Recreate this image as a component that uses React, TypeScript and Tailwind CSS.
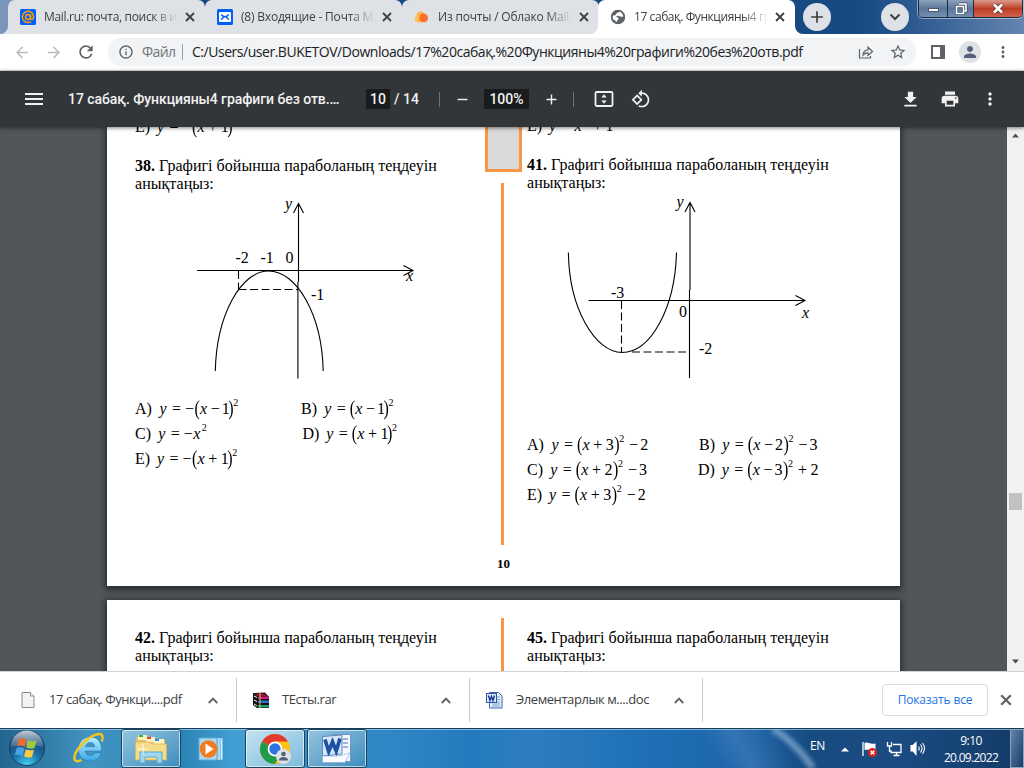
import React from "react";
import {
  MdAdd, MdArrowBack, MdArrowForward, MdFileDownload, MdInfoOutline, MdMenu, MdMoreVert,
  MdPerson, MdPrint, MdRefresh, MdRemove, MdRotate90DegreesCcw, MdStarBorder,
} from "react-icons/md";

/* ---------- tab strip ---------- */

const Cross = ({ cls }: { cls: string }) => (
  <svg viewBox="0 0 10 10" className={"shrink-0 " + cls}><path d="M1 1l8 8M9 1L1 9" fill="none" stroke="currentColor" strokeWidth="1.800" /></svg>
);

const MailRuIcon = () => (
  <svg width="16" height="16" viewBox="0 0 16 16" className="shrink-0">
    <rect width="16" height="16" rx="1.500" fill="#005ff9" />
    <g fill="none" stroke="#ff9e00" strokeWidth="1.500">
      <circle cx="8" cy="8" r="2.500" />
      <path d="M10.500 5.400V9c0 2.200 3.100 1.900 3.100-1A5.600 5.600 0 1 0 11 12.700" />
    </g>
  </svg>
);
const EnvelopeIcon = () => (
  <svg width="16" height="16" viewBox="0 0 16 16" className="shrink-0">
    <rect width="16" height="16" rx="1.500" fill="#005ff9" />
    <rect x="2" y="3" width="12" height="10" rx="1" fill="#fff" />
    <path d="M4.300 5.500q3.700 4.600 7.400 0M4.300 10.800L6.500 8.300M11.700 10.800L9.500 8.300" fill="none" stroke="#005ff9" strokeWidth="1.400" />
  </svg>
);
const CloudIcon = () => (
  <svg width="16" height="16" viewBox="0 0 16 16" className="shrink-0">
    <circle cx="6.500" cy="6.200" r="3.800" fill="#ffb13d" />
    <circle cx="4" cy="10" r="3.200" fill="#ffc35a" />
    <path d="M4 9h5v4.200H4z" fill="#ffb13d" />
    <circle cx="9.700" cy="8.900" r="4.300" fill="#f9702c" />
  </svg>
);
const GlobeIcon = () => (
  <svg width="16" height="16" viewBox="0 0 16 16" className="shrink-0">
    <circle cx="8" cy="8" r="7" fill="#5f6368" />
    <path d="M9.500 2.500c-1 1.500-3 1-3.500 2.500 0 1.500-1.500 1.500-3 1.500-.8 1.500-.6 3 .2 4.200 1-.2 1.800.3 2.300 1.300.3 1 1.500 1.200 1.500 0 0-1 1.500-1 1.500-2.300C8.300 8 6.500 8.300 6 7.200c1-.8 2.300-.7 3.500 0 1 .6 2.500.5 3.800.2-.1-2.200-1.600-4.200-3.800-4.900z" fill="#fff" />
    <circle cx="8" cy="8" r="6.400" fill="none" stroke="#5f6368" strokeWidth="1.500" />
  </svg>
);

const Tab = ({ icon, text, active, first, bar, textCls }: {
  icon: React.ReactNode; text: string; active?: boolean; first?: boolean; bar?: boolean; textCls: string;
}) => (
  <div className={"relative flex h-[34px] w-[197px] shrink-0 items-center rounded-t-[7px] pl-[12px] " + (active ? "z-10 bg-white" : "bg-[#dee1e6]")}>
    {(active || first) && (
      <svg className="absolute -left-2 bottom-0" width="8" height="8"><path d="M8 0v8H0A8 8 0 0 0 8 0" fill={active ? "#fff" : "#dee1e6"} /></svg>
    )}
    {active && (
      <svg className="absolute -right-2 bottom-0" width="8" height="8"><path d="M0 0v8h8A8 8 0 0 1 0 0" fill="#fff" /></svg>
    )}
    {icon}
    <div className="ml-[8px] w-[135px] overflow-hidden [mask-image:linear-gradient(90deg,#000_108px,transparent_134px)]">
      <span className={"block whitespace-nowrap text-[12px] leading-[18px] text-[#3c4043] " + textCls}>{text}</span>
    </div>
    <Cross cls="ml-[6px] h-[10px] w-[10px] text-[#3c4043]" />
    {bar && <div className="absolute right-[-1px] top-[7px] h-[20px] w-px bg-[#808388]" />}
  </div>
);

const WindowButtons = () => (
  <div className="ml-[9px] flex h-[18px] w-[105px] overflow-hidden rounded-b-[5px] border border-t-0 border-[#1b2c45] shadow-[0_0_0_1px_rgba(255,255,255,.45)]">
    <div className="flex w-[29px] items-end justify-center border-r border-[#1b2c45] bg-linear-to-b from-[#8fa4bf] via-[#5c7799] to-[#7290b3] pb-[5px]">
      <div className="h-[4px] w-[11px] border border-[#4a586c] bg-white" />
    </div>
    <div className="flex w-[26px] items-center justify-center border-r border-[#1b2c45] bg-linear-to-b from-[#8fa4bf] via-[#5c7799] to-[#7290b3]">
      <svg width="14" height="13" viewBox="0 0 14 13">
        <path d="M5 2h7v7h-2M2.500 4.500h7v7h-7z" fill="none" stroke="#43536b" strokeWidth="3.200" />
        <path d="M5 2h7v7h-2M2.500 4.500h7v7h-7z" fill="none" stroke="#fff" strokeWidth="1.600" />
      </svg>
    </div>
    <div className="flex grow items-center justify-center bg-linear-to-b from-[#d99a8c] via-[#bd3d24] via-50% to-[#d2614a]">
      <svg width="14" height="13" viewBox="0 0 14 13">
        <path d="M3 2.500l8 8M11 2.500l-8 8" stroke="#5b3a3a" strokeWidth="4.200" />
        <path d="M3 2.500l8 8M11 2.500l-8 8" stroke="#fff" strokeWidth="2.600" />
      </svg>
    </div>
  </div>
);

const TabStrip = () => (
  <div className="flex h-[34px] shrink-0 bg-[linear-gradient(90deg,#7b96bb_0px,#7b96bb_10px,#174a83_180px,#174a83_860px,#2d5a91_915px,#6485ae_1024px)] pl-[8px]">
    <Tab first bar icon={<MailRuIcon />} text="Mail.ru: почта, поиск в интернете" textCls="tracking-[-0.32px]" />
    <Tab bar icon={<EnvelopeIcon />} text="(8) Входящие - Почта Mail.ru" textCls="tracking-[-0.2px]" />
    <Tab icon={<CloudIcon />} text="Из почты / Облако Mail.ru" textCls="tracking-[-0.2px]" />
    <div className="-ml-[1px] flex">
      <Tab active icon={<GlobeIcon />} text="17 сабақ. Функцияны4 графиги" textCls="tracking-[-0.42px]" />
    </div>
    <div className="ml-[8px] mt-[3px] flex h-[28px] w-[28px] items-center justify-center rounded-full bg-[#dee1e6]">
      <MdAdd className="h-[20px] w-[20px] text-[#3c4043]" />
    </div>
    <div className="ml-[50px] mt-[3px] flex h-[28px] w-[28px] items-center justify-center rounded-full bg-[#dee1e6]">
      <svg width="12" height="8" viewBox="0 0 12 8"><path d="M1.500 1.500L6 6l4.500-4.500" fill="none" stroke="#3c4043" strokeWidth="2" /></svg>
    </div>
    <WindowButtons />
  </div>
);

/* ---------- address bar ---------- */

const AddressBar = () => (
  <div className="flex h-[37px] shrink-0 items-center border-b border-[#dadce0] bg-white pl-[13px]">
    <MdArrowBack className="h-[19px] w-[18px] text-[#bababa]" />
    <MdArrowForward className="ml-[14px] h-[19px] w-[18px] text-[#bababa]" />
    <MdRefresh className="ml-[13px] h-[20px] w-[20px] text-[#5f6368]" />
    <div className="ml-[12px] flex h-[28px] w-[808px] items-center rounded-full bg-[#f1f3f4] pl-[10px]">
      <MdInfoOutline className="h-[16px] w-[16px] text-[#5f6368]" />
      <span className="ml-[8px] w-[40px] whitespace-nowrap text-[14px] leading-5 text-[#70757a] tracking-[-0.6px]">Файл</span>
      <div className="h-[16px] w-px bg-[#9aa0a6]" />
      <span className="ml-[9px] w-[666px] whitespace-nowrap text-[14px] leading-5 text-[#202124] tracking-[-0.47px]">C:/Users/user.BUKETOV/Downloads/17%20сабақ.%20Функцияны4%20графиги%20без%20отв.pdf</span>
      <svg width="16" height="16" viewBox="0 0 16 16" className="text-[#5f6368]">
        <path d="M1.500 5v9h11v-2M5 11c.4-3.500 2.500-5 5-5.100V3.200L14.500 7.500 10 11.500V8.800C7.900 8.700 6.400 9.300 5 11z" fill="none" stroke="currentColor" strokeWidth="1.200" />
      </svg>
      <MdStarBorder className="ml-[15px] h-[18px] w-[18px] text-[#5f6368]" />
    </div>
    <div className="ml-[15px] h-[14px] w-[14px] border-2 border-r-[5px] border-[#5f6368]" />
    <div className="ml-[14px] flex h-[22px] w-[22px] items-center justify-center rounded-full bg-[#dee1e6]">
      <MdPerson className="h-[18px] w-[18px] text-[#52607a]" />
    </div>
    <MdMoreVert className="ml-[13px] h-[18px] w-[18px] text-[#5f6368]" />
  </div>
);

/* ---------- PDF toolbar ---------- */

const PdfToolbar = () => (
  <div className="relative z-20 flex h-[56px] shrink-0 items-center bg-[#323639] pl-[22px] font-[Roboto] text-[14px] font-medium text-[#f1f1f1] shadow-[0_1px_4px_rgba(0,0,0,.5)]">
    <MdMenu className="h-[24px] w-[24px]" />
    <span className="ml-[22px] w-[298px] whitespace-nowrap tracking-[-0.06px]">17 сабақ. Функцияны4 графиги без отв.…</span>
    <div className="flex h-[20px] w-[24px] items-center justify-center bg-[#191b1c]">10</div>
    <span className="ml-[4px] w-[45px] whitespace-nowrap">/ 14</span>
    <div className="h-[15px] w-px bg-[#6f7274]" />
    <MdRemove className="ml-[14px] h-[17px] w-[17px]" />
    <div className="ml-[13px] flex h-[20px] w-[45px] items-center justify-center bg-[#191b1c]">100%</div>
    <MdAdd className="ml-[14px] h-[17px] w-[17px]" />
    <div className="ml-[13px] h-[15px] w-px bg-[#6f7274]" />
    <svg className="ml-[20px]" width="20" height="18" viewBox="0 0 20 18">
      <rect x="1.500" y="2" width="17" height="14" rx="1.200" fill="none" stroke="currentColor" strokeWidth="1.800" />
      <path d="M10 4.300L12.700 7.500H7.300zM10 13.700L12.700 10.500H7.300z" fill="currentColor" />
    </svg>
    <MdRotate90DegreesCcw className="ml-[17px] h-[20px] w-[20px]" />
    <MdFileDownload className="ml-[249px] h-[21px] w-[21px]" />
    <MdPrint className="ml-[19px] h-[20px] w-[20px]" />
    <MdMoreVert className="ml-[20px] h-[20px] w-[20px]" />
  </div>
);

/* ---------- formulas ---------- */

const ADVANCE: Record<string, number> = {
  y: 12.5, "=": 13, u: 9.5, "(": 5.5, x: 10.7, "−": 11, "+": 12.5, "1": 6.5, "2": 8.5, "3": 8.5, ")": 5, "^": 10,
};
const LABEL_WIDTH: Record<string, number> = { A: 24.5, B: 23.2, C: 23.2, D: 23.8, E: 22 };

/* "u" is a unary minus, "^" a raised 2. */
const Formula = ({ src }: { src: string }) => (
  <span className="flex">
    {src.split("").map((c, i) => {
      const style = { width: c === "x" && src[i + 1] === "^" ? 8.5 : ADVANCE[c] };
      if (c === "^") return <span key={i} style={style} className="relative -top-[6.5px] text-[10px]">2</span>;
      if (c === "(" || c === ")") return <span key={i} style={style} className="origin-[50%_55%] scale-y-[1.25]">{c}</span>;
      if (c === "x" || c === "y") return <span key={i} style={style} className="italic">{c}</span>;
      return <span key={i} style={style}>{c === "u" ? "−" : c}</span>;
    })}
  </span>
);

const Answer = ({ label, src, cls }: { label: string; src: string; cls: string }) => (
  <div className={"flex whitespace-nowrap " + cls}>
    <span style={{ width: LABEL_WIDTH[label] }}>{label})</span>
    <Formula src={src} />
  </div>
);

const Title = ({ n }: { n: string }) => (
  <div className="h-[36px] whitespace-nowrap pl-[28px] leading-[18px] tracking-[0.025px]">
    <b>{n}.</b> Графигі бойынша параболаның теңдеуін<br />анықтаңыз:
  </div>
);

const LeftGraph = () => (
  <svg width="378" height="203" viewBox="107 193 378 203" className="block" fill="none" stroke="#000" strokeWidth="1.100">
    <path d="M197 270.500H413M403.500 265.500l9.500 5-9.500 5M298.500 203.500V282M297.900 282V378.500M293.500 213l5-9.500 5 9.500" />
    <path d="M215.300 371C216.500 315 241 271 268.500 271C297 271 322 315 323.200 371" />
    <path d="M238.500 271v18M238.500 289.500H298" strokeDasharray="8 3.500" />
    <g fill="#000" stroke="none" fontSize="16">
      <text x="235.500" y="263">-2</text><text x="260.500" y="263">-1</text><text x="285.500" y="263">0</text><text x="311" y="300">-1</text>
      <g fontStyle="italic"><text x="285" y="209">y</text><text x="406" y="281">x</text></g>
    </g>
  </svg>
);

const RightGraph = () => (
  <svg width="378" height="240" viewBox="522 192 378 240" className="block" fill="none" stroke="#000" strokeWidth="1.100">
    <path d="M588.500 300.500H804.500M795.500 295.500l9.500 5-9.500 5M690 203V290M689.500 290V378M685 212l5-9.500 5 9.500" />
    <path d="M568.400 252.500C569 308 595 352.500 622 352.500C651 352.500 675 308 676.500 252.500" />
    <path d="M621.500 301v51M632 352H689" strokeDasharray="8 3.500" />
    <g fill="#000" stroke="none" fontSize="16">
      <text x="611" y="298">-3</text><text x="679" y="317">0</text><text x="699" y="354">-2</text>
      <g fontStyle="italic"><text x="676.500" y="207">y</text><text x="802" y="318">x</text></g>
    </g>
  </svg>
);

const Viewer = () => (
  <div className="flex h-[544px] shrink-0 overflow-hidden bg-[#525659]">
    <div className="flex grow flex-col gap-[14px] overflow-hidden pl-[107px] font-['Liberation_Serif'] text-[16px] text-black">
      <div className="flex h-[459px] w-[793px] shrink-0 bg-white shadow-[0_2px_6px_2px_rgba(0,0,0,.5)]">
        <div className="w-[378px]">
          <div className="h-[30px] overflow-hidden">
            <Answer label="E" src="y=u(x+1)" cls="-mt-[9px] pl-[28px] leading-[18px]" />
          </div>
          <Title n="38" />
          <LeftGraph />
          <div className="grid grid-cols-[166px_1fr] pl-[28px] leading-[25px]">
            <Answer label="A" src="y=u(x−1)^" cls="" />
            <Answer label="B" src="y=(x−1)^" cls="" />
            <Answer label="C" src="y=ux^" cls="" />
            <Answer label="D" src="y=(x+1)^" cls="pl-[1.5px]" />
            <Answer label="E" src="y=u(x+1)^" cls="" />
          </div>
        </div>
        <div className="flex w-[37px] flex-col items-center">
          <div className="h-[45px] w-[37px] border-[3px] border-t-0 border-[#f79646] bg-[#d9d9d9]" />
          <div className="mr-[2px] mt-[11px] h-[362px] w-[3px] bg-[#f79646]" />
          <div className="mt-[11px] text-[13px] font-bold leading-[16px]">10</div>
        </div>
        <div className="w-[378px]">
          <div className="h-[29px] overflow-hidden">
            <Answer label="E" src="y=x^+1" cls="-mt-[10px] pl-[5px] leading-[18px]" />
          </div>
          <div className="-ml-[23px]"><Title n="41" /></div>
          <RightGraph />
          <div className="grid grid-cols-[172px_1fr] pl-[5px] leading-[25px]">
            <Answer label="A" src="y=(x+3)^−2" cls="" />
            <Answer label="B" src="y=(x−2)^−3" cls="" />
            <Answer label="C" src="y=(x+2)^−3" cls="" />
            <Answer label="D" src="y=(x−3)^+2" cls="-ml-[1px]" />
            <Answer label="E" src="y=(x+3)^−2" cls="" />
          </div>
        </div>
      </div>
      <div className="flex h-[200px] w-[793px] shrink-0 bg-white shadow-[0_2px_6px_2px_rgba(0,0,0,.5)]">
        <div className="w-[378px] pt-[29px]"><Title n="42" /></div>
        <div className="flex w-[37px] justify-center pr-[2px] pt-[18px]"><div className="w-[3px] bg-[#f79646]" /></div>
        <div className="-ml-[23px] w-[378px] pt-[29px]"><Title n="45" /></div>
      </div>
    </div>
    <div className="flex w-[17px] shrink-0 flex-col items-center bg-[#f1f1f1] pt-[6px]">
      <svg width="7" height="5"><path d="M0 4.500L3.500 .5 7 4.500z" fill="#505050" /></svg>
      <div className="mt-[355px] h-[17px] w-[13px] bg-[#c1c1c1]" />
      <svg className="mt-[149px]" width="7" height="5"><path d="M0 .5L3.500 4.500 7 .5z" fill="#505050" /></svg>
    </div>
  </div>
);

/* ---------- downloads ---------- */

const Chevron = () => (
  <svg width="10" height="7" viewBox="0 0 10 7" className="shrink-0"><path d="M.8 6L5 1.700 9.200 6" fill="none" stroke="#5f6368" strokeWidth="1.900" /></svg>
);
const PageIcon = () => (
  <svg width="16" height="18" viewBox="0 0 16 18"><path d="M2 1.500h8.500l3.500 3.500v11.500H2z" fill="#f4f4f4" stroke="#8c8c8c" /><path d="M10.500 1.500V5H14" fill="#fff" stroke="#8c8c8c" /></svg>
);
const RarIcon = () => (
  <svg width="16" height="17" viewBox="0 0 16 17">
    <path d="M0 1l12-.5L16 5v11H4L0 13z" fill="#111" />
    <path d="M1 1.500h10l3.500 2.500H4z" fill="#8a1746" /><path d="M5 4.500h11v2.500H5z" fill="#d01f76" />
    <path d="M5 8.500h11V11H5z" fill="#2f6fd0" /><path d="M5 13h11v2.500H5z" fill="#1f9a78" />
    <path d="M1 4l3 1.500M1 8l3 1.500M1 12l3 2" stroke="#fff" strokeWidth="1" />
    <path d="M7 1v15" stroke="#e3c53a" strokeWidth="1" />
  </svg>
);
const DocIcon = () => (
  <svg width="17" height="17" viewBox="0 0 17 17">
    <path d="M3.500 .5h9l3.500 3.500v12H3.500z" fill="#e8f0fb" stroke="#3f67a8" />
    <path d="M11 5h3M11 7.500h3M6 10h8M6 12h8M6 14h8" stroke="#7da0d8" />
    <rect x=".5" y="1.500" width="10" height="9" fill="#dfe9f9" stroke="#2c57a5" />
    <path d="M2.500 3.500l1.500 5 1.500-4 1.500 4 1.500-5" fill="none" stroke="#173f92" strokeWidth="1.500" />
  </svg>
);

const Download = ({ icon, name, cls }: { icon: React.ReactNode; name: string; cls: string }) => (
  <div className={"flex h-[44px] items-center border-r border-[#c8cacd] pr-[18px] " + cls}>
    {icon}
    <span className="ml-[13px] grow whitespace-nowrap text-[13px] text-[#3c4043] tracking-[-0.43px]">{name}</span>
    <Chevron />
  </div>
);

const DownloadBar = () => (
  <div className="flex h-[57px] shrink-0 items-center border-t border-[#d0d2d5] bg-white">
    <Download icon={<PageIcon />} name="17 сабақ. Функци....pdf" cls="w-[237px] pl-[20px]" />
    <Download icon={<RarIcon />} name="ТЕсты.rar" cls="w-[233px] pl-[16px]" />
    <Download icon={<DocIcon />} name="Элементарлык м....doc" cls="w-[233px] pl-[16px]" />
    <div className="ml-[179px] flex h-[32px] w-[106px] items-center justify-center rounded-[4px] border border-[#dadce0] text-[12px] text-[#1a73e8] tracking-[-0.15px]">Показать все</div>
    <Cross cls="ml-[12px] h-[12px] w-[12px] text-[#5f6368]" />
  </div>
);

/* ---------- taskbar ---------- */

const StartOrb = () => (
  <svg width="38" height="38" viewBox="0 0 38 38">
    <defs>
      <radialGradient id="orb" cx=".5" cy="1" r=".95"><stop offset="0" stopColor="#43d3f5" /><stop offset=".45" stopColor="#1c70a8" /><stop offset="1" stopColor="#13365e" /></radialGradient>
      <linearGradient id="gloss" x2="0" y2="1"><stop offset="0" stopColor="#fff" stopOpacity=".75" /><stop offset="1" stopColor="#fff" stopOpacity=".12" /></linearGradient>
    </defs>
    <circle cx="19" cy="19" r="17.500" fill="url(#orb)" stroke="#1b3f60" />
    <path d="M2.500 18a16.500 16.500 0 0 1 33 0Q19 14 2.500 18" fill="url(#gloss)" />
    <path d="M11 9.500q3.500-1.500 7.500 1l-1.800 7.500q-4-2.200-7.500-1z" fill="#ee6a2c" />
    <path d="M20 11q4 2 8.500.5l-2 7.500q-4.500 1.500-8.300-.7z" fill="#a5c93c" />
    <path d="M8.800 18.700q4-1 7.500 1L14.500 27q-3.500-2-7.500-1z" fill="#49a3e3" />
    <path d="M17.800 20.200q4 2 8.200.5l-2 7.300q-4.200 1.500-8-.7z" fill="#fbc93a" />
  </svg>
);
const IeIcon = () => (
  <svg width="34" height="34" viewBox="0 0 34 34">
    <defs><linearGradient id="ie" x2="0" y2="1"><stop offset="0" stopColor="#b8f0ff" /><stop offset="1" stopColor="#3aa6e6" /></linearGradient></defs>
    <path d="M29.500 20H13.200c.4 3 2.400 4.500 5.200 4.500 2.200 0 3.700-.9 4.500-2.600h6.200C27.500 27 23.600 30 18.200 30 11.200 30 6.300 25.300 6.300 18.300S11.300 6 18.200 6c7.300 0 11.700 5.200 11.300 14zM13.300 15.800h9.600c-.3-2.700-2-4.300-4.700-4.300s-4.400 1.600-4.900 4.300z" fill="url(#ie)" stroke="#1a75b5" strokeWidth=".5" />
    <path d="M29.500 10.500c2-4 1.500-8-3-7.500C18 4 5 16 2.500 25c-1 5 2 6.500 7 4" fill="none" stroke="#f5c51d" strokeWidth="2.400" />
  </svg>
);
const FolderIcon = () => (
  <svg width="34" height="32" viewBox="0 0 34 32">
    <path d="M2 4h9l2 3h18v18H2z" fill="#e0c069" /><path d="M4 2h9v5H4z" fill="#fff2bd" /><path d="M12 4h9v5h-9z" fill="#fff2bd" /><path d="M20 6h10v5H20z" fill="#fff2bd" />
    <path d="M5 2h4v2H5z" fill="#25b34a" /><path d="M13 4h4v2h-4z" fill="#d9432f" /><path d="M21 6h4v2h-4z" fill="#2b8be0" />
    <path d="M1.500 9h14l2 2h15v16h-31z" fill="#f5dc87" stroke="#d9b65c" strokeWidth=".7" />
    <path d="M6 30V19h22v11h-5v-6H11v6z" fill="#9fd8ef" stroke="#5aa9cf" />
    <path d="M9 11v10M4 16h10" stroke="#fff" strokeWidth="1" opacity=".9" />
  </svg>
);
const PlayerIcon = () => (
  <svg width="28" height="26" viewBox="0 0 28 26">
    <path d="M14 2h11v22H14z" fill="#7ec3e8" /><path d="M21 2v22M23.500 3v20" stroke="#d8f0fb" />
    <path d="M1 2h18v22H1z" fill="#a9d8ef" stroke="#63a9d3" />
    <circle cx="10.500" cy="13" r="8.800" fill="#f37a1f" /><path d="M7.500 7.500v11l8-5.500z" fill="#fff" />
  </svg>
);
const ChromeIcon = () => (
  <svg width="34" height="34" viewBox="0 0 34 34">
    <circle cx="17" cy="17" r="15" fill="#fbc116" />
    <path d="M17 17L4 9.500A15 15 0 0 1 30 9.500H17z" fill="#e33b2e" />
    <path d="M17 17L4 9.500A15 15 0 0 0 17 32l6.500-11z" fill="#229a4b" />
    <circle cx="17" cy="17" r="7.400" fill="#fff" /><circle cx="17" cy="17" r="5.700" fill="#2f73e0" />
    <circle cx="25.500" cy="24.500" r="7.500" fill="#dee1e6" /><circle cx="25.500" cy="22" r="2.300" fill="#52607a" /><path d="M20.800 28.500c0-4.800 9.400-4.800 9.400 0z" fill="#52607a" />
  </svg>
);
const WordIcon = () => (
  <svg width="32" height="32" viewBox="0 0 32 32">
    <path d="M10 1.500h19.500v27H10z" fill="#f4f8fd" stroke="#7195c7" /><path d="M22 6h5M22 10h5M22 14h5" stroke="#7ca0d4" strokeWidth="1.300" />
    <path d="M1.500 3.500L21 2v19L1.500 23z" fill="#d7e7f8" stroke="#5c89c2" />
    <path d="M4 6.500l3.700 12L11.500 9l3.700 9L19 5.500" fill="none" stroke="#1c50a4" strokeWidth="3.700" />
    <path d="M1.500 23h17.500l10-3-5 9.500H1.500z" fill="#fafcff" stroke="#8aabd5" strokeWidth=".7" />
  </svg>
);

const TaskButton = ({ children, bright }: { children: React.ReactNode; bright?: boolean }) => (
  <div className={"flex h-[39px] w-[60px] shrink-0 items-center justify-center rounded-[3px] border border-[#18455f] shadow-[inset_0_0_0_1px_rgba(255,255,255,.6)] " + (bright ? "bg-linear-to-br from-[#c3e3f2] to-[#7dbbdc]" : "bg-linear-to-br from-[#93c5df] to-[#3c8dbd]")}>{children}</div>
);

const Taskbar = () => (
  <div className="flex h-[40px] shrink-0 border-t border-[#1c3b55] bg-[linear-gradient(60deg,transparent_0_69%,rgba(255,255,255,.1)_72%,transparent_76%),linear-gradient(90deg,#22658f_0px,#4294c1_90px,#2b83b5_180px,#439fd3_235px,#3687bd_330px,#2f87c6_390px,#237bbd_470px,#2e7dc0_530px,#2070b6_640px,#1c63a8_755px,#174b80_810px,#1b4b82_900px,#123a66_1024px)] shadow-[inset_0_1px_0_rgba(170,220,250,.65)]">
    <div className="ml-[8px] w-[38px]"><StartOrb /></div>
    <div className="ml-[26px] mt-[2px] w-[34px]"><IeIcon /></div>
    <div className="ml-[15px]"><TaskButton><FolderIcon /></TaskButton></div>
    <div className="ml-[17px] mt-[7px] w-[28px]"><PlayerIcon /></div>
    <div className="ml-[19px]"><TaskButton bright><ChromeIcon /></TaskButton></div>
    <div className="ml-[2px]"><TaskButton><WordIcon /></TaskButton></div>
    <div className="relative grow overflow-hidden">
      <svg className="absolute left-[400px] top-0" width="60" height="39"><path d="M6 0C20 8 34 22 46 39" fill="none" stroke="#b9d6ee" strokeOpacity=".5" strokeWidth="7" className="blur-[2px]" /></svg>
      <span className="absolute left-[443px] top-[9px] text-[12px] leading-[16px] text-white tracking-[-0.4px]">EN</span>
    </div>
    <div className="flex w-[99px] shrink-0 items-center text-white">
      <svg width="8" height="5" className="mt-[2px]"><path d="M0 4.500L4 .5l4 4z" fill="#fff" /></svg>
      <svg className="ml-[12px] mt-[1px]" width="17" height="17" viewBox="0 0 17 17">
        <path d="M2 1v14" stroke="#fff" strokeWidth="1.300" /><path d="M3.500 2c4-1.500 4 1.500 11 .5V9c-5 1-6-1-11 0z" fill="#fff" />
        <circle cx="11.500" cy="11.500" r="4.600" fill="#d9231c" /><path d="M9.700 9.700l3.600 3.600M13.300 9.700l-3.600 3.600" stroke="#fff" strokeWidth="1.500" />
      </svg>
      <svg className="ml-[8px] mt-[1px]" width="17" height="17" viewBox="0 0 17 17" fill="none" stroke="#fff" strokeWidth="1.300">
        <path d="M7 3.500h8v8H5V9M7.500 14.500h6M10.500 11.500v3M1.500 1v4h4V1M3.500 5v6" />
      </svg>
      <svg className="ml-[7px]" width="17" height="15" viewBox="0 0 17 15" fill="none" stroke="#fff" strokeWidth="1.100">
        <path d="M1 4.500h2L6 1.500v12L3 10H1z" fill="#fff" /><path d="M8.500 5.500q1.500 2 0 4M10.500 3.500q3 4 0 8M12.500 2q4 5.500 0 11" />
      </svg>
    </div>
    <div className="ml-[-2px] flex w-[66px] shrink-0 flex-col items-center pt-[3px] text-[12px] leading-[17px] text-white"><span className="tracking-[-0.5px]">9:10</span><span className="whitespace-nowrap tracking-[-0.7px]">20.09.2022</span></div>
    <div className="ml-[6px] h-[39px] w-[14px] shrink-0 border border-[#8aa4bd] bg-linear-to-br from-[#6386ab] to-[#173c66]" />
  </div>
);

export default function App() {
  return (
    <div className="flex h-[768px] w-[1024px] flex-col overflow-hidden font-['Open_Sans','Noto_Sans',sans-serif]">
      <TabStrip />
      <AddressBar />
      <PdfToolbar />
      <Viewer />
      <DownloadBar />
      <Taskbar />
    </div>
  );
}
